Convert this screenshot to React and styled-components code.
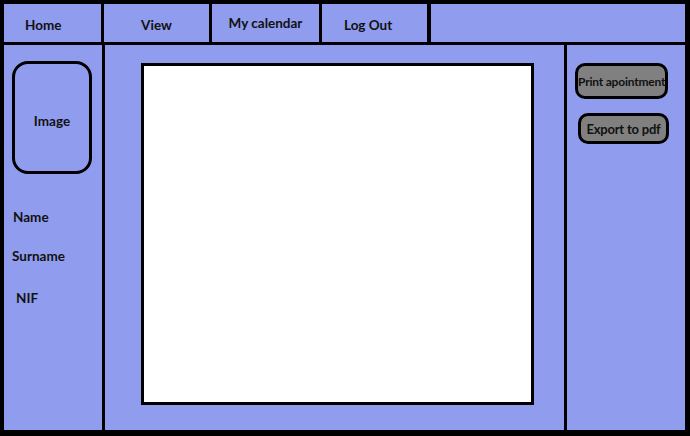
import React from "react";
import styled, { createGlobalStyle } from "styled-components";

const Global = createGlobalStyle`
  html, body { margin: 0; padding: 0; background: #000; }
  body { font-family: Lato, "Open Sans", sans-serif; }
`;

const BG = "#909cee";

const Frame = styled.div`
  width: 690px;
  height: 436px;
  box-sizing: border-box;
  border-style: solid;
  border-color: #000;
  border-width: 4px 5px 6px 4px;
  background: ${BG};
  display: flex;
  flex-direction: column;
`;

const Nav = styled.nav`
  height: 38px;
  display: flex;
  border-bottom: 3px solid #000;
  flex-shrink: 0;
`;

const NavItem = styled.div`
  width: ${(p) => p.$w}px;
  flex-shrink: 0;
  box-sizing: border-box;
  border-right: ${(p) => p.$bw || 3}px solid #000;
  display: flex;
  align-items: center;
  justify-content: ${(p) => (p.$pad != null ? "flex-start" : "center")};
  padding-left: ${(p) => p.$pad || 0}px;
  padding-top: ${(p) => p.$dy || 0}px;
  font-weight: 700;
  font-size: 13.5px;
  color: #111;
`;

const NavRest = styled.div`
  flex: 1;
`;

const Body = styled.div`
  flex: 1;
  display: flex;
  min-height: 0;
`;

const Sidebar = styled.aside`
  width: 101px;
  flex-shrink: 0;
  box-sizing: border-box;
  border-right: 3px solid #000;
  display: flex;
  flex-direction: column;
  padding: 16px 0 0 8px;
`;

const ImageBox = styled.div`
  width: 80px;
  height: 113px;
  box-sizing: border-box;
  border: 3px solid #000;
  border-radius: 16px;
  display: flex;
  align-items: center;
  justify-content: center;
  font-weight: 700;
  font-size: 13.5px;
  color: #111;
  padding: 6px 0 0 0;
`;

const Field = styled.div`
  font-weight: 700;
  font-size: 13.5px;
  color: #111;
  margin-left: ${(p) => p.$x}px;
  margin-top: ${(p) => p.$mt}px;
  line-height: 16px;
`;

const Center = styled.main`
  width: 462px;
  flex-shrink: 0;
  border-right: 3px solid #000;
  padding: 18px 30px 25px 36px;
  box-sizing: border-box;
  display: flex;
`;

const Canvas = styled.div`
  flex: 1;
  background: #fff;
  border: 3px solid #000;
`;

const Actions = styled.div`
  flex: 1;
  display: flex;
  flex-direction: column;
  padding-top: 18px;
`;

const Button = styled.div`
  width: ${(p) => p.$w}px;
  height: ${(p) => p.$h}px;
  margin-left: ${(p) => p.$x}px;
  margin-top: ${(p) => p.$mt || 0}px;
  box-sizing: border-box;
  background: #808080;
  border: 3px solid #000;
  border-radius: 10px;
  display: flex;
  align-items: center;
  justify-content: ${(p) => (p.$left ? "flex-start" : "center")};
  padding-left: ${(p) => (p.$left ? 0 : 0)}px;
  font-weight: 700;
  font-size: ${(p) => p.$fs}px;
  color: #111;
  white-space: nowrap;
  letter-spacing: -0.2px;
`;

export default function App() {
  return (
    <>
      <Global />
      <Frame>
        <Nav>
          <NavItem $w={100} $pad={21} $dy={4}>Home</NavItem>
          <NavItem $w={108} $dy={4}>View</NavItem>
          <NavItem $w={110} $dy={-2}>My calendar</NavItem>
          <NavItem $w={109} $bw={4} $pad={22} $dy={4}>Log Out</NavItem>
          <NavRest />
        </Nav>
        <Body>
          <Sidebar>
            <ImageBox>Image</ImageBox>
            <Field $x={1} $mt={35}>Name</Field>
            <Field $x={0} $mt={23}>Surname</Field>
            <Field $x={4} $mt={26}>NIF</Field>
          </Sidebar>
          <Center>
            <Canvas />
          </Center>
          <Actions>
            <Button $w={93} $h={36} $x={8} $fs={12} $left>Print apointment</Button>
            <Button $w={91} $h={31} $x={11} $mt={14} $fs={13}>Export to pdf</Button>
          </Actions>
        </Body>
      </Frame>
    </>
  );
}
